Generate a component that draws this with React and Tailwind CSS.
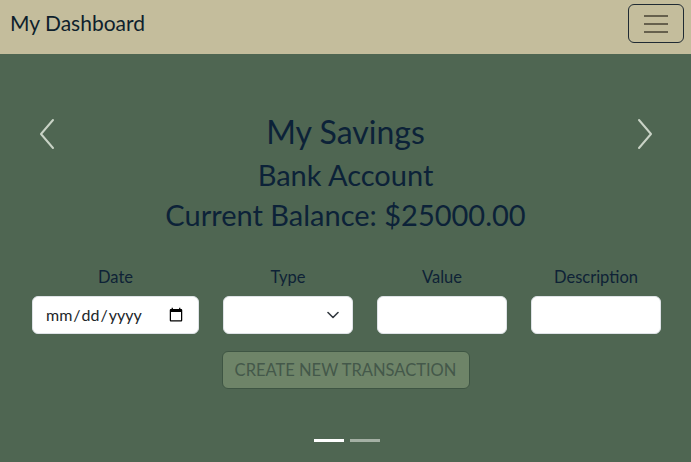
import { useState } from 'react';

const fieldClass =
  'h-[38px] w-full rounded-[6px] border border-[#dee2e6] bg-white px-3 text-[16px] text-[#212529] outline-none';

const Field = ({ label, children }) => (
  <div className="flex flex-col items-center gap-[7px]">
    <label className="text-[16.5px] leading-[24px] text-[#0e2236]">{label}</label>
    {children}
  </div>
);

const Chevron = ({ dir }) => (
  <svg width="16" height="32" viewBox="0 0 16 32" fill="none">
    <path
      d={dir === 'left' ? 'M14 2 L2 16 L14 30' : 'M2 2 L14 16 L2 30'}
      stroke="#c9d3c6"
      strokeWidth="2"
      strokeLinecap="round"
      strokeLinejoin="round"
    />
  </svg>
);

export default function App() {
  const [slide, setSlide] = useState(0);

  return (
    <div className="min-h-screen bg-[#4f6652] font-['Lato',sans-serif]">
      {/* navbar */}
      <nav className="flex h-[54px] items-start justify-between bg-[#c4bd9c] pl-[10px] pr-[7px] pt-[4px]">
        <span className="text-[21px] leading-[38px] text-[#0e1f2c]">My Dashboard</span>
        <button className="flex h-[39px] w-[56px] flex-col items-center justify-center gap-[6px] rounded-[6px] border border-[#1f2a33]">
          <span className="h-[2px] w-[24px] bg-[#66604d]" />
          <span className="h-[2px] w-[24px] bg-[#66604d]" />
          <span className="h-[2px] w-[24px] bg-[#66604d]" />
        </button>
      </nav>

      {/* carousel */}
      <div className="relative">
        <button
          onClick={() => setSlide(slide === 0 ? 1 : 0)}
          className="absolute left-[39px] top-[64px]"
        >
          <Chevron dir="left" />
        </button>
        <button
          onClick={() => setSlide(slide === 0 ? 1 : 0)}
          className="absolute right-[38px] top-[64px]"
        >
          <Chevron dir="right" />
        </button>

        <div className="flex flex-col items-center pt-[58px] text-[#0c2238]">
          <h1 className="text-[32px] leading-[40px]">My Savings</h1>
          <h2 className="mt-[3px] text-[29px] leading-[40px]">Bank Account</h2>
          <h2 className="text-[29px] leading-[40px]">Current Balance: $25000.00</h2>
        </div>

        <div className="mt-[30px] grid grid-cols-[167px_130px_130px_130px] gap-x-[24px] pl-[32px]">
          <Field label="Date">
            <input type="date" className={fieldClass} />
          </Field>
          <Field label="Type">
            <div className="relative w-full">
              <select className={`${fieldClass} appearance-none`}>
                <option value=""></option>
                <option>Deposit</option>
                <option>Withdrawal</option>
              </select>
              <svg
                className="pointer-events-none absolute right-[14px] top-[15px]"
                width="12"
                height="8"
                viewBox="0 0 12 8"
                fill="none"
              >
                <path d="M1 1.5 L6 6.5 L11 1.5" stroke="#343a40" strokeWidth="1.6" strokeLinecap="round" strokeLinejoin="round" />
              </svg>
            </div>
          </Field>
          <Field label="Value">
            <input type="text" className={fieldClass} />
          </Field>
          <Field label="Description">
            <input type="text" className={fieldClass} />
          </Field>
        </div>

        <div className="mt-[17px] flex justify-center">
          <button
            disabled
            className="h-[38px] w-[248px] rounded-[6px] border border-[#3e5543] bg-[#6e8468] text-[16.5px] uppercase text-[#44584a]"
          >
            Create New Transaction
          </button>
        </div>

        <div className="mt-[50px] flex justify-center gap-[6px] pl-[2px]">
          {[0, 1].map((i) => (
            <button
              key={i}
              onClick={() => setSlide(i)}
              className={`h-[3px] w-[30px] ${slide === i ? 'bg-white' : 'bg-[#a4b0a4]'}`}
            />
          ))}
        </div>
      </div>
    </div>
  );
}
